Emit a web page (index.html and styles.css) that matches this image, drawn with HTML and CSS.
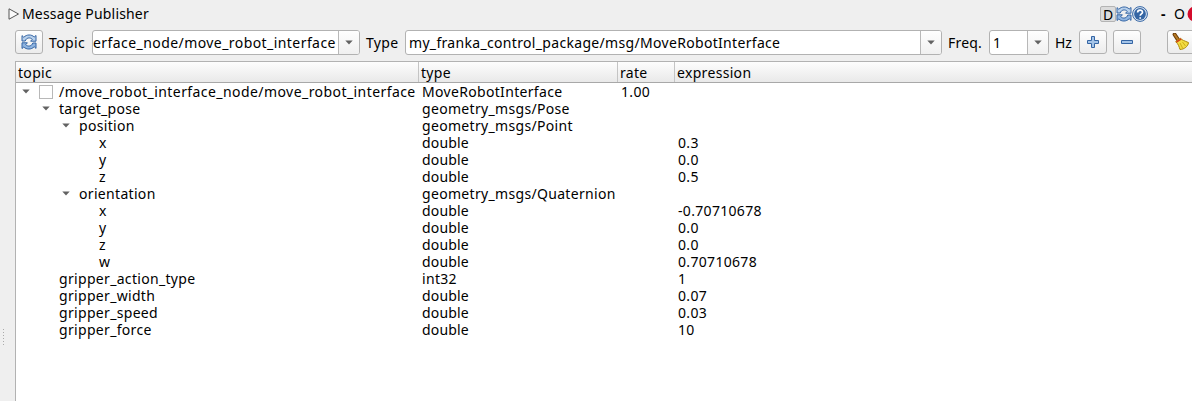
FILE: index.html
```
<!DOCTYPE html>
<html lang="en">
<head>
<meta charset="utf-8">
<title>Message Publisher</title>
<link rel="stylesheet" href="styles.css">
</head>
<body>
<svg class="defs" width="0" height="0">
  <symbol id="refresh" viewBox="0 0 16 16">
    <path d="M1 7V1.600l1.800 1.700C5.600 .2 10.600 .3 13.200 3l1.800-1.500V7.200H9.600l1.700-1.900C9.400 3.300 6.200 3.600 4.800 5.700L4.200 7z" fill="#b7d0ec" stroke="#3465a4" stroke-linejoin="round"/>
    <path d="M15 9v5.400l-1.800-1.700c-2.800 3.100-7.800 3-10.400.3L1 14.500V8.800h5.400l-1.700 1.900c1.900 2 5.100 1.700 6.500-.4l.6-1.300z" fill="#8fb4e0" stroke="#3465a4" stroke-linejoin="round"/>
  </symbol>
  <symbol id="arrow" viewBox="0 0 8 5"><path d="M.3.500h7.400L4 4.600z" fill="#626262"/></symbol>
</svg>
<header class="titlebar">
  <svg class="pane-icon" viewBox="0 0 12 12"><path d="M1 .8v10.400L10.500 6z" fill="#fafafa" stroke="#555"/></svg>
  <h1 class="title">Message Publisher</h1>
  <div class="dock-tools">
    <span class="dock-d">D</span>
    <svg class="dock-icon" viewBox="0 0 16 16"><use href="#refresh"/></svg>
    <svg class="dock-icon" viewBox="0 0 16 16"><circle cx="8" cy="8" r="7.400" fill="#dfe8f3" stroke="#3465a4"/><circle cx="8" cy="8" r="5.900" fill="#3465a4"/><path d="M5.600 6.500c0-3.200 4.900-3.200 4.900-.3C10.500 7.900 8.200 7.900 8.200 9.800M8.200 11.200v1.600" fill="none" stroke="#fff" stroke-width="1.700"/></svg>
    <span class="dock-min">-</span>
    <span class="dock-float">O</span>
    <svg class="dock-close" viewBox="0 0 16 16"><circle cx="8" cy="8" r="7.500" fill="#d40b2c"/><path d="M7 5l6 6M13 5l-6 6" stroke="#fff" stroke-width="2"/></svg>
  </div>
</header>
<div class="toolbar">
  <button class="btn"><svg width="16" height="16"><use href="#refresh"/></svg></button>
  <span class="label label-topic">Topic</span>
  <div class="combo combo-topic"><span class="value">erface_node/move_robot_interface</span><span class="drop"><svg width="8" height="5"><use href="#arrow"/></svg></span></div>
  <span class="label label-type">Type</span>
  <div class="combo combo-type"><span class="value">my_franka_control_package/msg/MoveRobotInterface</span><span class="drop"><svg width="8" height="5"><use href="#arrow"/></svg></span></div>
  <span class="label label-freq">Freq.</span>
  <div class="combo combo-freq"><span class="value">1</span><span class="drop"><svg width="8" height="5"><use href="#arrow"/></svg></span></div>
  <span class="label label-hz">Hz</span>
  <button class="btn btn-add"><svg width="14" height="14"><path d="M5.500 1.500h3v4h4v3h-4v4h-3v-4h-4v-3h4z" fill="#a4c4e8" stroke="#3465a4" stroke-linejoin="round"/></svg></button>
  <button class="btn btn-remove"><svg width="14" height="14"><path d="M1.500 5.500h11v3h-11z" fill="#a4c4e8" stroke="#3465a4" stroke-linejoin="round"/></svg></button>
  <button class="btn btn-clear"><svg width="18" height="18" viewBox="0 0 18 18"><path d="M2.600 1.500l3.200 4.800" stroke="#6b3d08" stroke-width="4" stroke-linecap="round"/><path d="M2.600 1.500l3.200 4.800" stroke="#b77a25" stroke-width="2" stroke-linecap="round"/><path d="M3.600 8.700l4.900-3.500c1 1.900 4.200 2.600 8 4.400-.5 3.800-4 6.600-8.500 6.900C7 13.600 6.500 10.900 3.600 8.700z" fill="#f2dc42" stroke="#ad8a05" stroke-linejoin="round"/><path d="M4.400 9.200l4.900-3.300" stroke="#d33a1a" stroke-width="1.400"/><path d="M8 10l2.500 5M10.500 9l3 4" stroke="#cfae16"/></svg></button>
</div>
<main class="content">
  <div class="splitter"><i></i><i></i><i></i><i></i><i></i><i></i></div>
  <section class="tree">
    <div class="row head"><span>topic</span><span>type</span><span>rate</span><span>expression</span></div>
    <div class="row first"><span class="l0"><svg class="tw" width="8" height="5"><use href="#arrow"/></svg><i class="check"></i><b class="root-name">/move_robot_interface_node/move_robot_interface</b></span><span>MoveRobotInterface</span><span class="rate">1.00</span><span></span></div>
    <div class="row"><span class="l1"><svg class="tw" width="8" height="5"><use href="#arrow"/></svg>target_pose</span><span>geometry_msgs/Pose</span></div>
    <div class="row"><span class="l2"><svg class="tw" width="8" height="5"><use href="#arrow"/></svg>position</span><span>geometry_msgs/Point</span></div>
    <div class="row"><span class="l3">x</span><span class="prim">double</span><span></span><span>0.3</span></div>
    <div class="row"><span class="l3">y</span><span class="prim">double</span><span></span><span>0.0</span></div>
    <div class="row"><span class="l3">z</span><span class="prim">double</span><span></span><span>0.5</span></div>
    <div class="row"><span class="l2"><svg class="tw" width="8" height="5"><use href="#arrow"/></svg>orientation</span><span>geometry_msgs/Quaternion</span></div>
    <div class="row"><span class="l3">x</span><span class="prim">double</span><span></span><span>-0.70710678</span></div>
    <div class="row"><span class="l3">y</span><span class="prim">double</span><span></span><span>0.0</span></div>
    <div class="row"><span class="l3">z</span><span class="prim">double</span><span></span><span>0.0</span></div>
    <div class="row"><span class="l3">w</span><span class="prim">double</span><span></span><span>0.70710678</span></div>
    <div class="row"><span class="leaf">gripper_action_type</span><span>int32</span><span></span><span>1</span></div>
    <div class="row"><span class="leaf">gripper_width</span><span class="prim">double</span><span></span><span>0.07</span></div>
    <div class="row"><span class="leaf">gripper_speed</span><span class="prim">double</span><span></span><span>0.03</span></div>
    <div class="row"><span class="leaf">gripper_force</span><span class="prim">double</span><span></span><span>10</span></div>
  </section>
</main>
</body>
</html>
```
FILE: styles.css
```
* { box-sizing: border-box; }
body { margin: 0; width: 1192px; height: 401px; overflow: hidden; background: #efefef; color: #000; font: 14px/17px "Noto Sans", sans-serif; white-space: nowrap; display: flex; flex-direction: column; }
svg { display: block; flex: none; }
.defs { position: absolute; }
.titlebar { height: 29px; flex: none; display: flex; align-items: center; padding: 0 0 2px 8px; }
.pane-icon { width: 12px; height: 12px; margin-right: 2px; }
.title { margin: 0; font-size: 14px; font-weight: 400; letter-spacing: .17px; }
.dock-tools { margin-left: auto; display: flex; align-items: center; width: 92px; flex: none; }
.dock-d { width: 16px; height: 16px; border: 1px solid #b4b4b4; border-radius: 2px; background: #dcdcdc; text-align: center; line-height: 15px; flex: none; }
.dock-icon { width: 16px; height: 16px; }
.dock-min { width: 6px; margin-left: 13px; flex: none; font-weight: 700; }
.dock-float { width: 13px; margin-left: 7px; flex: none; }
.dock-close { width: 16px; height: 16px; }
.toolbar { height: 32px; flex: none; display: flex; align-items: flex-start; padding: 1px 0 0 15px; }
.btn { width: 28px; height: 24px; padding: 0; flex: none; display: flex; align-items: center; justify-content: center; border: 1px solid #b2b2b2; border-radius: 3px; background: linear-gradient(#fefefe, #ececec); }
.label { line-height: 25px; flex: none; }
.label-topic { margin-left: 6px; width: 43px; letter-spacing: .4px; }
.label-type { margin-left: 6px; width: 39px; letter-spacing: .3px; }
.label-freq { margin-left: 6px; width: 41px; letter-spacing: .2px; }
.label-hz { margin-left: 6px; width: 24px; }
.btn-remove { margin-left: 6px; }
.btn-clear { margin-left: 26px; }
.combo { height: 25px; flex: none; display: flex; border: 1px solid #b2b2b2; border-radius: 3px; background: #fff; overflow: hidden; }
.combo-topic { width: 268px; }
.combo-type { width: 537px; }
.combo-freq { width: 60px; }
.value { flex: 1; padding-left: 3px; line-height: 24px; overflow: hidden; letter-spacing: .32px; }
.combo-topic .value { padding-left: 0; letter-spacing: .43px; }
.drop { width: 21px; flex: none; border-left: 1px solid #b8b8b8; background: linear-gradient(#fefefe, #f0f0f0); display: flex; align-items: center; justify-content: center; }
.content { flex: 1; display: flex; }
.splitter { width: 15px; padding: 268px 0 0 3px; display: flex; flex-direction: column; gap: 2px; }
.splitter i { width: 1px; height: 1px; background: #aaa; }
.tree { flex: 1; background: #fff; border: solid #b2b2b2; border-width: 1px 0 0 1px; }
.row { display: grid; grid-template-columns: 403px 199px 57px 1fr; height: 17px; letter-spacing: .32px; }
.row > span { padding-left: 3px; display: flex; align-items: center; }
.row.head { height: 21px; background: linear-gradient(#fdfdfd, #e9e9e9); border-bottom: 1px solid #a8a8a8; }
.head > span { padding-left: 2px; border-right: 1px solid #c4c4c4; }
.head > span:last-child { border-right: 0; }
.row > .l0 { padding-left: 6px; }
.row > .l1 { padding-left: 26px; }
.row > .l2 { padding-left: 46px; }
.row > .l3 { padding-left: 83px; }
.row > .leaf { padding-left: 43px; }
.row > .rate { padding-left: 3px; }
.row > .prim { letter-spacing: .17px; }
.row.first > span { height: 17px; }
.tw { margin-right: 9px; }
.check { width: 14px; height: 14px; border: 1px solid #b8b8b8; background: #fff; margin-right: 6px; flex: none; }
.root-name { font-weight: 400; letter-spacing: .43px; }
```
